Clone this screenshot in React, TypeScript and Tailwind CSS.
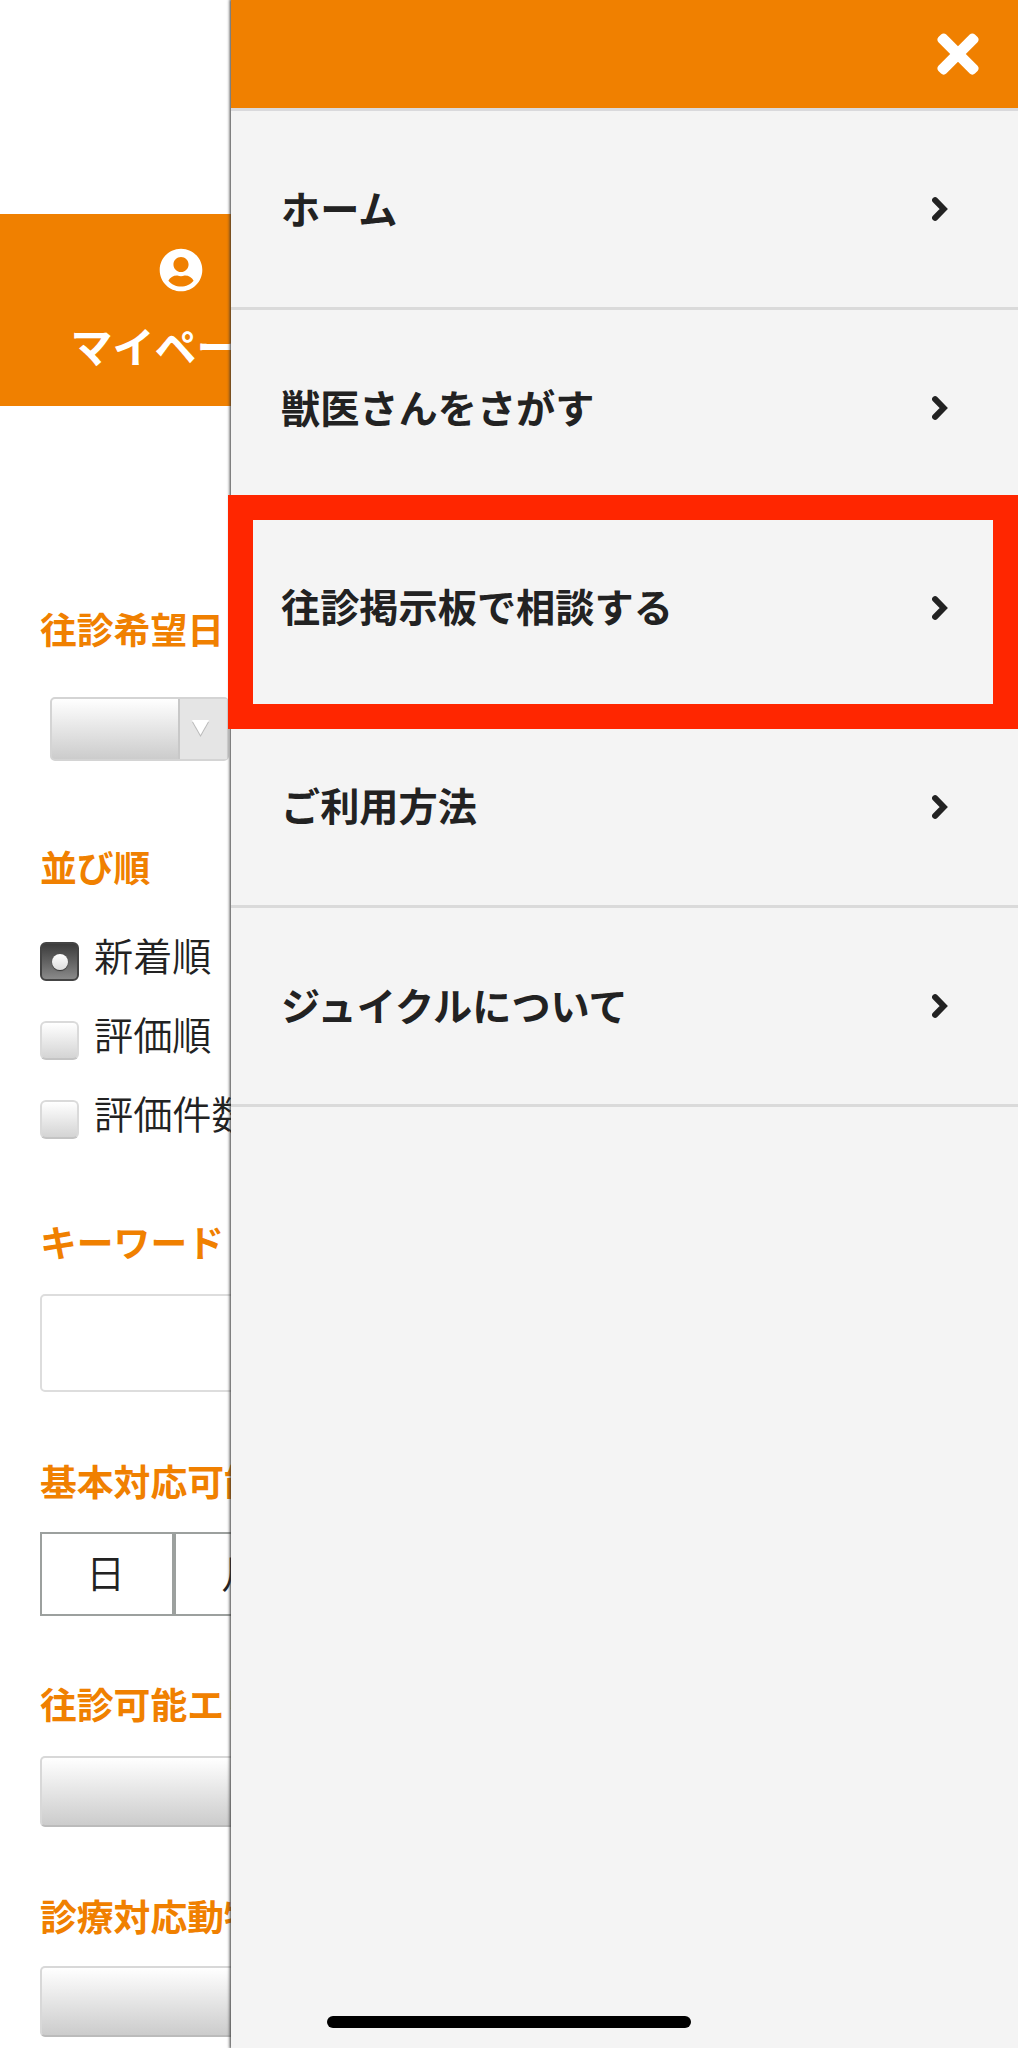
import React from "react";
import { FaTimes, FaUserCircle } from "react-icons/fa";

const menuItems = [
  { label: "ホーム" },
  { label: "獣医さんをさがす" },
  { label: "往診掲示板で相談する", highlighted: true },
  { label: "ご利用方法" },
  { label: "ジュイクルについて" },
];

const sortOptions = [
  { label: "新着順", checked: true },
  { label: "評価順", checked: false },
  { label: "評価件数順", checked: false },
];

function Heading({ children }: { children: React.ReactNode }) {
  return (
    <h2 className="h-[54px] text-[36.800px] leading-[53px] font-bold text-[#f08000]">
      {children}
    </h2>
  );
}

function SelectBar() {
  return (
    <div className="h-[71px] rounded-[5px] border-2 border-[#d8d8d8] border-b-[#bbb] bg-linear-to-b from-white to-[#ccc]" />
  );
}

function ChevronRight() {
  return (
    <svg width="16" height="24" viewBox="0 0 16 24" fill="none">
      <path
        d="M3.100 3.200L11.700 12L3.100 20.800"
        stroke="currentColor"
        strokeWidth="6"
        strokeLinecap="round"
      />
    </svg>
  );
}

function SearchPage() {
  return (
    <div className="h-full w-[420px] shrink-0">
      {/* my page bar */}
      <div className="mt-[214px] flex h-[192px] w-[362px] flex-col items-center bg-[#f08000] pt-[34px] text-white">
        <FaUserCircle className="size-[44px]" />
        <span className="mt-[20px] mr-[12px] text-[42px] leading-[66px] font-bold">
          マイページ
        </span>
      </div>
      {/* search form */}
      <div className="pt-[196px] pl-[40px]">
        <Heading>往診希望日</Heading>
        <div className="mt-[41px] ml-[10px] flex h-[64px] w-[179px] rounded-[5px] border-2 border-[#d4d4d4] bg-linear-to-b from-white to-[#ccc]">
          <div className="flex-1" />
          <div className="flex w-[49px] items-center justify-center border-l-2 border-[#c8c8c8] bg-[#e5e5e5]">
            <svg width="20" height="20" viewBox="0 0 20 20" className="mr-[6px]">
              <path d="M1 3h17L9.500 18z" fill="#bbb" />
              <path d="M1 1h17L9.500 16z" fill="#fff" />
            </svg>
          </div>
        </div>

        <div className="mt-[79px]">
          <Heading>並び順</Heading>
        </div>
        <ul className="mt-[26px]">
          {sortOptions.map((option) => (
            <li key={option.label} className="flex h-[78.750px] gap-[15px]">
              {option.checked ? (
                <span className="mt-[22px] flex size-[39px] items-center justify-center rounded-[6px] border-2 border-[#444] bg-linear-to-b from-[#3c3c3c] to-[#8a8a8a]">
                  <span className="size-[16px] rounded-full bg-linear-to-b from-white to-[#ddd] shadow-[0_1px_1px_#333]" />
                </span>
              ) : (
                <span className="mt-[22px] size-[39px] rounded-[6px] border-2 border-[#dadada] border-b-[#c4c4c4] bg-linear-to-b from-white to-[#d4d4d4]" />
              )}
              <span className="text-[39.200px] leading-[68px] font-[350] text-[#222]">
                {option.label}
              </span>
            </li>
          ))}
        </ul>

        <div className="mt-[59px]">
          <Heading>キーワード</Heading>
        </div>
        <div className="mt-[25px] h-[98px] rounded-[5px] border-2 border-[#ddd]" />

        <div className="mt-[62px]">
          <Heading>基本対応可能日</Heading>
        </div>
        <div className="mt-[24px] flex text-[39.200px] leading-[74px] font-[350] text-[#222]">
          <div className="h-[84px] w-[134px] border-2 border-[#9ca09e] pr-[3px] text-center">
            日
          </div>
          <div className="h-[84px] w-[134px] border-2 border-[#9ca09e] text-center">
            月
          </div>
        </div>

        <div className="mt-[61px]">
          <Heading>往診可能エリア</Heading>
        </div>
        <div className="mt-[25px]">
          <SelectBar />
        </div>

        <div className="mt-[62px]">
          <Heading>診療対応動物</Heading>
        </div>
        <div className="mt-[23px]">
          <SelectBar />
        </div>
      </div>
    </div>
  );
}

function Drawer() {
  return (
    <div className="absolute inset-y-0 right-0 w-[787px] bg-[#f4f4f4] shadow-[0_0_3px_1px_#333]">
      <div className="flex h-[111px] items-center justify-end border-b-[3px] border-[#d9d9dc] bg-[#f08000] pr-[30px] text-white">
        <FaTimes className="size-[60px]" />
      </div>
      <ul>
        {menuItems.map((item) => (
          <li
            key={item.label}
            className="relative flex h-[199.250px] items-center justify-between border-b-[3px] border-[#dadada] pr-[70px] pl-[50px] text-[#222]"
          >
            <span className="pb-[5px] text-[39.200px] leading-[60px] font-bold">
              {item.label}
            </span>
            <ChevronRight />
            {item.highlighted && (
              <div className="absolute -top-[15px] right-0 -left-[3px] h-[234px] border-[25px] border-[#ff2600]" />
            )}
          </li>
        ))}
      </ul>
    </div>
  );
}

export default function App() {
  return (
    <div className="relative flex h-[2048px] w-[1018px] overflow-hidden bg-white font-['Noto_Sans_CJK_JP',sans-serif]">
      <SearchPage />
      <Drawer />
      {/* home indicator */}
      <div className="absolute bottom-[20px] left-[327px] h-[12px] w-[364px] rounded-full bg-black" />
    </div>
  );
}
